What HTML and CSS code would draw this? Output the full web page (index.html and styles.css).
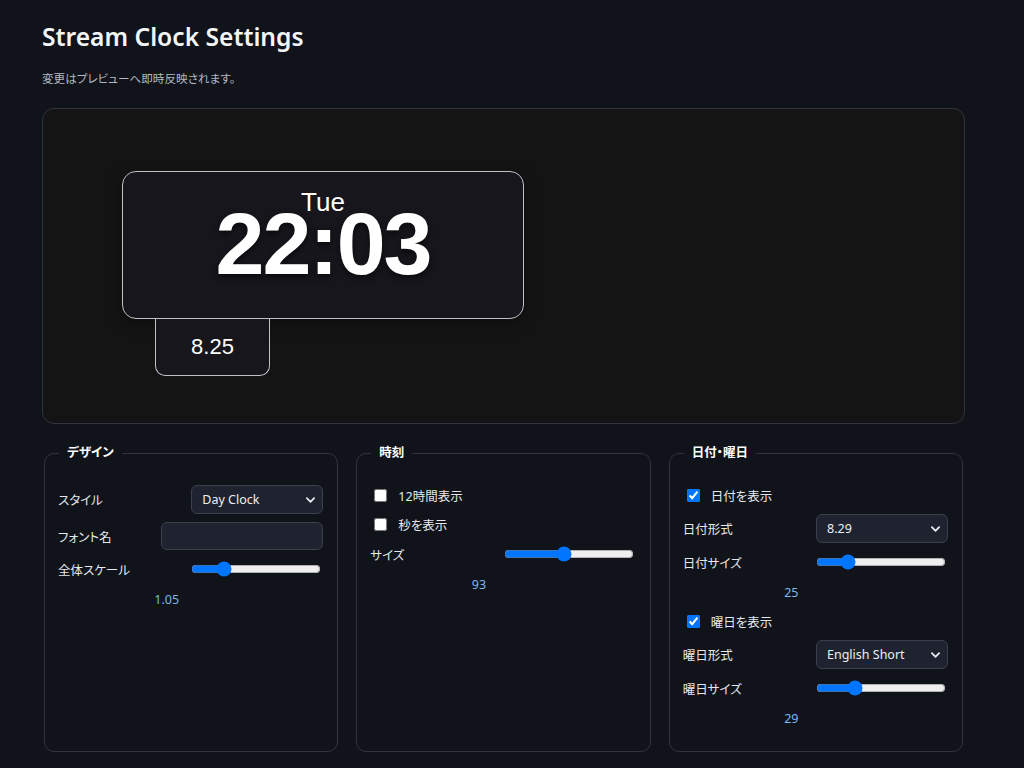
FILE: index.html
```html
<!DOCTYPE html>
<html lang="ja">
<head>
  <meta charset="UTF-8" />
  <meta name="viewport" content="width=device-width, initial-scale=1" />
  <title>Stream Clock Settings</title>
  <link rel="stylesheet" href="styles.css">
</head>
<body>
  <main class="page">
    <h1 class="title">Stream Clock Settings</h1>
    <p class="lead">変更はプレビューへ即時反映されます。</p>

    <section class="preview">
      <div class="clock">
        <div class="clock-card">
          <div class="clock-day">Tue</div>
          <div class="clock-time">22:03</div>
        </div>
        <div class="clock-date">8.25</div>
      </div>
    </section>

    <div class="panels">
      <fieldset class="panel">
        <legend>デザイン</legend>
        <div class="row">
          <label>スタイル</label>
          <div class="select">
            <select><option>Day Clock</option><option>Simple</option></select>
            <svg viewBox="0 0 10 6" width="9" height="6"><path d="M1 1l4 4 4-4" fill="none" stroke="currentColor" stroke-width="2" stroke-linecap="round" stroke-linejoin="round"/></svg>
          </div>
        </div>
        <div class="row">
          <label>フォント名</label>
          <input class="text" type="text" />
        </div>
        <div class="row">
          <label>全体スケール</label>
          <input type="range" min="0.5" max="3" step="0.05" value="1.05" />
        </div>
        <div class="value">1.05</div>
      </fieldset>

      <fieldset class="panel">
        <legend>時刻</legend>
        <label class="check"><input type="checkbox" /> 12時間表示</label>
        <label class="check"><input type="checkbox" /> 秒を表示</label>
        <div class="row">
          <label>サイズ</label>
          <input type="range" min="20" max="180" value="93" />
        </div>
        <div class="value">93</div>
      </fieldset>

      <fieldset class="panel">
        <legend>日付・曜日</legend>
        <label class="check"><input type="checkbox" checked /> 日付を表示</label>
        <div class="row">
          <label>日付形式</label>
          <div class="select">
            <select><option>8.29</option><option>08/29</option></select>
            <svg viewBox="0 0 10 6" width="9" height="6"><path d="M1 1l4 4 4-4" fill="none" stroke="currentColor" stroke-width="2" stroke-linecap="round" stroke-linejoin="round"/></svg>
          </div>
        </div>
        <div class="row">
          <label>日付サイズ</label>
          <input type="range" min="10" max="80" value="25" />
        </div>
        <div class="value">25</div>
        <label class="check"><input type="checkbox" checked /> 曜日を表示</label>
        <div class="row">
          <label>曜日形式</label>
          <div class="select">
            <select><option>English Short</option><option>日本語</option></select>
            <svg viewBox="0 0 10 6" width="9" height="6"><path d="M1 1l4 4 4-4" fill="none" stroke="currentColor" stroke-width="2" stroke-linecap="round" stroke-linejoin="round"/></svg>
          </div>
        </div>
        <div class="row">
          <label>曜日サイズ</label>
          <input type="range" min="10" max="80" value="29" />
        </div>
        <div class="value">29</div>
      </fieldset>
    </div>
  </main>
</body>
</html>
```

FILE: styles.css
```css
body {
  margin: 0;
  padding: 0 0 0 42px;
  background: #10131a;
  color: #e6e8ec;
  font-family: "Noto Sans", "Noto Sans CJK JP", sans-serif;
  font-feature-settings: "palt";
}
.page {
  width: 923px;
}
.title {
  margin: 0;
  padding-top: 20px;
  font-size: 24.6px;
  font-weight: 600;
  line-height: 34px;
  color: #f4f5f7;
}
.lead {
  margin: 16px 0 0;
  font-size: 11.6px;
  line-height: 18px;
  color: #b3b8c2;
}

/* preview area */
.preview {
  box-sizing: border-box;
  height: 316px;
  margin-top: 20px;
  padding: 62px 0 0 79px;
  background: #141414;
  border: 1px solid #30343e;
  border-radius: 12px;
}
.clock {
  font-family: "Liberation Sans", Arial, sans-serif;
  color: #fff;
}
.clock-card {
  box-sizing: border-box;
  width: 402px;
  height: 148px;
  padding-top: 17px;
  text-align: center;
  background: #17161c;
  border: 1px solid #bfbfc4;
  border-radius: 14px;
  box-shadow: 0 4px 14px rgba(0,0,0,0.35);
}
.clock-day {
  font-size: 26px;
  line-height: 26px;
}
.clock-time {
  margin-top: -15px;
  font-size: 88px;
  font-weight: bold;
  line-height: 88px;
  letter-spacing: -2px;
  text-shadow: 0 3px 6px rgba(0,0,0,0.6);
}
.clock-date {
  box-sizing: border-box;
  width: 115px;
  height: 57px;
  margin-left: 33px;
  display: flex;
  align-items: center;
  justify-content: center;
  font-size: 22px;
  background: #17161c;
  border: 1px solid #bfbfc4;
  border-top: none;
  border-radius: 0 0 10px 10px;
}

/* settings panels */
.panels {
  display: grid;
  grid-template-columns: repeat(3, 1fr);
  gap: 14px;
  margin-top: 21px;
}
.panel {
  min-width: 0;
  margin: 0 2px;
  padding: 24px 14px 23px 13px;
  border: 1px solid #30343e;
  border-radius: 10px;
  font-size: 12.5px;
}
.panel legend {
  padding: 0 8px;
  margin-left: 1px;
  font-weight: bold;
  line-height: 16px;
  color: #fff;
}
.row {
  display: flex;
  align-items: center;
  justify-content: space-between;
  min-height: 22px;
  margin-bottom: 8px;
}
.check {
  display: flex;
  align-items: center;
  gap: 8px;
  height: 21px;
  margin-bottom: 8px;
}
.check input {
  margin: 3px 3px 3px 4px;
}
.select {
  position: relative;
  color: #e6e8ec;
}
.select select {
  appearance: none;
  box-sizing: border-box;
  width: 132px;
  height: 29px;
  padding: 0 24px 0 10px;
  background: #1f2330;
  border: 1px solid #3b404d;
  border-radius: 6px;
  color: #eceef2;
  font: inherit;
  font-size: 12.5px;
}
.select svg {
  position: absolute;
  right: 8px;
  top: 12px;
  pointer-events: none;
}
.text {
  box-sizing: border-box;
  width: 162px;
  height: 28px;
  background: #1f2330;
  border: 1px solid #3b404d;
  border-radius: 6px;
  color: #eceef2;
}
input[type="range"] {
  width: 130px;
  margin: 2px;
}
/* the row above leaves 8px, this adds 3 more */
.value {
  margin: 11px 0 9px;
  padding-right: 48px;
  text-align: center;
  line-height: 18px;
  color: #7db7ef;
}
.value:last-child {
  margin-bottom: 0;
}
```
